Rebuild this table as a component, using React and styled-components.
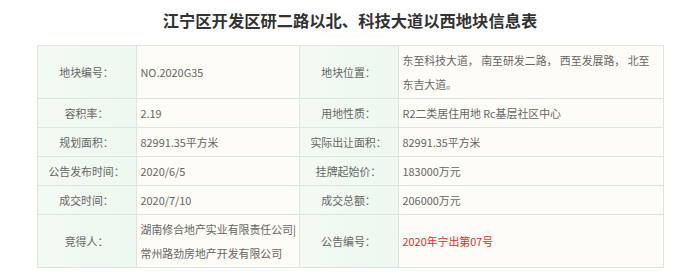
import React from "react";
import styled, { createGlobalStyle } from "styled-components";

const Global = createGlobalStyle`
  html, body { margin: 0; padding: 0; background: #fff; }
  body { font-family: "Noto Sans CJK SC", "Noto Sans", sans-serif; }
`;

const Page = styled.div`
  width: 700px;
  display: flex;
  flex-direction: column;
  align-items: center;
  padding-top: 8px;
`;

const Title = styled.h1`
  margin: 0 0 13px 0;
  font-size: 16.3px;
  line-height: 24px;
  font-weight: 700;
  color: #333;
  text-align: center;
`;

const Table = styled.table`
  width: 627px;
  table-layout: fixed;
  border-collapse: collapse;
  font-size: 10.9px;
  color: #666;
`;

const Cell = styled.td`
  border: 1px solid #dce5dc;
  line-height: 24px;
  padding: 2px 4px;
  vertical-align: middle;
`;

const Label = styled(Cell)`
  background: linear-gradient(90deg, #f3faf3 0%, #edf8ee 100%);
  text-align: center;
`;

const Value = styled(Cell)`
  background: #fdfcf7;
  text-align: left;
  white-space: nowrap;
  padding-right: 0;
  overflow: hidden;
  color: ${(p) => (p.$red ? "#e0312b" : "#666")};
`;

const rows = [
  ["容积率：", "2.19", "用地性质：", "R2二类居住用地 Rc基层社区中心"],
  ["规划面积：", "82991.35平方米", "实际出让面积：", "82991.35平方米"],
  ["公告发布时间：", "2020/6/5", "挂牌起始价：", "183000万元"],
  ["成交时间：", "2020/7/10", "成交总额：", "206000万元"],
];

export default function App() {
  return (
    <>
      <Global />
      <Page>
        <Title>江宁区开发区研二路以北、科技大道以西地块信息表</Title>
        <Table>
          <colgroup>
            <col style={{ width: 99 }} />
            <col style={{ width: 163 }} />
            <col style={{ width: 99 }} />
            <col style={{ width: 265 }} />
          </colgroup>
          <tbody>
            <tr>
              <Label>地块编号：</Label>
              <Value>NO.2020G35</Value>
              <Label>地块位置：</Label>
              <Value>
                东至科技大道， 南至研发二路， 西至发展路， 北至
                <br />
                东吉大道。
              </Value>
            </tr>
            {rows.map((r) => (
              <tr key={r[0]}>
                <Label>{r[0]}</Label>
                <Value>{r[1]}</Value>
                <Label>{r[2]}</Label>
                <Value>{r[3]}</Value>
              </tr>
            ))}
            <tr>
              <Label>竞得人：</Label>
              <Value>
                湖南修合地产实业有限责任公司|
                <br />
                常州路劲房地产开发有限公司
              </Value>
              <Label>公告编号：</Label>
              <Value $red>2020年宁出第07号</Value>
            </tr>
          </tbody>
        </Table>
      </Page>
    </>
  );
}
